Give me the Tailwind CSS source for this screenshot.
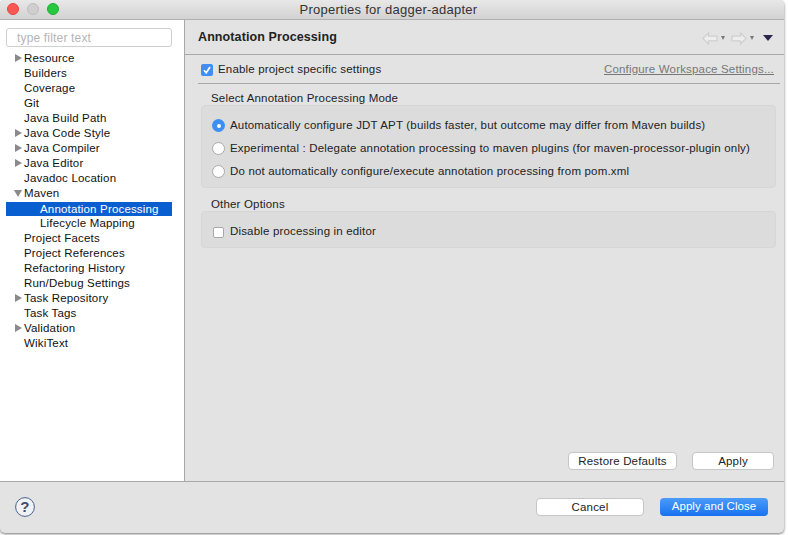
<!DOCTYPE html>
<html lang="en">
<head>
<meta charset="UTF-8">
<title>Properties for dagger-adapter</title>
<script src="https://cdn.jsdelivr.net/npm/@tailwindcss/browser@4"></script>
</head>
<body class="bg-white overflow-hidden">
<div class="w-[788px] h-[535px] bg-white font-['Liberation_Sans',sans-serif] text-[11.5px] tracking-[0.17px] text-[#222]">
  <div class="w-[784px] h-[533px] flex flex-col bg-[#e3e3e3] rounded-t-[5px] rounded-b-[5px] overflow-hidden shadow-[0_1px_3px_rgba(0,0,0,0.55)]">

    <!-- title bar -->
    <div class="relative h-[20px] shrink-0 flex items-center justify-center pr-[7px] bg-gradient-to-b from-[#e8e8e8] to-[#d2d2d2] border-b border-[#b1b1b1] text-[13px] tracking-[0.25px] text-[#333]">
      <div class="absolute left-[7px] top-[3px] flex gap-[8px]">
        <span class="w-[12px] h-[12px] rounded-full bg-[#fc5753] border border-[#df4744]"></span>
        <span class="w-[12px] h-[12px] rounded-full bg-[#cfcfcf] border border-[#bdbdbd]"></span>
        <span class="w-[12px] h-[12px] rounded-full bg-[#27c83f] border border-[#1fad32]"></span>
      </div>
      <span>Properties for dagger-adapter</span>
    </div>

    <div class="flex h-[461px] shrink-0">
      <!-- tree -->
      <div class="w-[185px] shrink-0 bg-white border-r border-[#a8a8a8] pt-[8px]">
        <div class="ml-[6px] w-[166px] h-[19px] border border-[#cfcfcf] rounded-[3px] pl-[10px] flex items-center text-[#b5b5b5] text-[12px]">type filter text</div>
        <div class="mt-[4px] ml-[6px] w-[166px] text-[#111] leading-[15px]">
          <div class="h-[15px] pl-[18px] relative"><span class="absolute left-[9px] top-[3px] w-0 h-0 border-y-[4px] border-y-transparent border-l-[7px] border-l-[#8a8a8a]"></span>Resource</div>
          <div class="h-[15px] pl-[18px]">Builders</div>
          <div class="h-[15px] pl-[18px]">Coverage</div>
          <div class="h-[15px] pl-[18px]">Git</div>
          <div class="h-[15px] pl-[18px]">Java Build Path</div>
          <div class="h-[15px] pl-[18px] relative"><span class="absolute left-[9px] top-[3px] w-0 h-0 border-y-[4px] border-y-transparent border-l-[7px] border-l-[#8a8a8a]"></span>Java Code Style</div>
          <div class="h-[15px] pl-[18px] relative"><span class="absolute left-[9px] top-[3px] w-0 h-0 border-y-[4px] border-y-transparent border-l-[7px] border-l-[#8a8a8a]"></span>Java Compiler</div>
          <div class="h-[15px] pl-[18px] relative"><span class="absolute left-[9px] top-[3px] w-0 h-0 border-y-[4px] border-y-transparent border-l-[7px] border-l-[#8a8a8a]"></span>Java Editor</div>
          <div class="h-[15px] pl-[18px]">Javadoc Location</div>
          <div class="h-[15px] pl-[18px] relative"><span class="absolute left-[8px] top-[4px] w-0 h-0 border-x-[4px] border-x-transparent border-t-[7px] border-t-[#8a8a8a]"></span>Maven</div>
          <div class="h-[14px] leading-[14px] my-[0.5px] pl-[34px] bg-[#0a5fd0] text-white">Annotation Processing</div>
          <div class="h-[15px] pl-[34px]">Lifecycle Mapping</div>
          <div class="h-[15px] pl-[18px]">Project Facets</div>
          <div class="h-[15px] pl-[18px]">Project References</div>
          <div class="h-[15px] pl-[18px]">Refactoring History</div>
          <div class="h-[15px] pl-[18px]">Run/Debug Settings</div>
          <div class="h-[15px] pl-[18px] relative"><span class="absolute left-[9px] top-[3px] w-0 h-0 border-y-[4px] border-y-transparent border-l-[7px] border-l-[#8a8a8a]"></span>Task Repository</div>
          <div class="h-[15px] pl-[18px]">Task Tags</div>
          <div class="h-[15px] pl-[18px] relative"><span class="absolute left-[9px] top-[3px] w-0 h-0 border-y-[4px] border-y-transparent border-l-[7px] border-l-[#8a8a8a]"></span>Validation</div>
          <div class="h-[15px] pl-[18px]">WikiText</div>
        </div>
      </div>

      <!-- right panel -->
      <div class="flex-1 flex flex-col min-w-0">
        <div class="h-[35px] shrink-0 border-b border-[#a8a8a8] flex items-center justify-between pl-[13px] pr-[11px]">
          <span class="text-[12.5px] font-bold tracking-[0.1px] text-[#222]">Annotation Processing</span>
          <div class="flex items-center pt-[2px]">
            <svg width="16" height="13" viewBox="0 0 16 13" fill="#eeeeee" stroke="#d0d0d0" stroke-width="1.3"><path d="M.9 6.5 6.5 1v3.2H15v4.6H6.5V12z"/></svg>
            <span class="ml-[3px] w-0 h-0 border-x-[2.5px] border-x-transparent border-t-[4px] border-t-[#777]"></span>
            <svg class="ml-[6px]" width="16" height="13" viewBox="0 0 16 13" fill="#eeeeee" stroke="#d0d0d0" stroke-width="1.3"><path d="M15.1 6.5 9.5 1v3.2H1v4.6h8.5V12z"/></svg>
            <span class="ml-[3px] w-0 h-0 border-x-[2.5px] border-x-transparent border-t-[4px] border-t-[#777]"></span>
            <span class="ml-[9px] w-0 h-0 border-x-[5px] border-x-transparent border-t-[6px] border-t-[#2c2550]"></span>
          </div>
        </div>

        <div class="flex-1 flex flex-col pl-[13px] pr-[4px] min-h-0">
          <div class="h-[29px] shrink-0 flex items-center justify-between border-b border-[#a8a8a8] pr-[6px] pt-[1px]">
            <label class="flex items-center gap-[5px] pl-[3px]">
              <span class="w-[12px] h-[12px] rounded-[2px] bg-[#3d8ff6] flex items-center justify-center">
                <svg width="10" height="10" viewBox="0 0 10 10" fill="none" stroke="#fff" stroke-width="1.7"><path d="M2 5.2 4.2 7.8 8 2"/></svg>
              </span>
              <span>Enable project specific settings</span>
            </label>
            <span class="underline text-[#777]">Configure Workspace Settings...</span>
          </div>

          <div class="pl-[13px] mt-[8px] leading-[13px]">Select Annotation Processing Mode</div>
          <div class="mt-0 ml-[3px] w-[575px] h-[83px] rounded-[4px] bg-[#dcdcdc] border border-[#d6d6d6] flex flex-col pt-[8px] pl-[10px]">
            <div class="h-[23px] flex items-center gap-[5px]">
              <span class="w-[13px] h-[13px] rounded-full bg-[#3d8ff6] flex items-center justify-center"><span class="w-[4px] h-[4px] rounded-full bg-white"></span></span>
              <span>Automatically configure JDT APT (builds faster, but outcome may differ from Maven builds)</span>
            </div>
            <div class="h-[23px] flex items-center gap-[5px]">
              <span class="w-[13px] h-[13px] rounded-full bg-white border border-[#a9a9a9]"></span>
              <span>Experimental : Delegate annotation processing to maven plugins (for maven-processor-plugin only)</span>
            </div>
            <div class="h-[23px] flex items-center gap-[5px]">
              <span class="w-[13px] h-[13px] rounded-full bg-white border border-[#a9a9a9]"></span>
              <span>Do not automatically configure/execute annotation processing from pom.xml</span>
            </div>
          </div>

          <div class="pl-[13px] mt-[10px] leading-[13px]">Other Options</div>
          <div class="mt-0 ml-[3px] w-[575px] h-[37px] rounded-[4px] bg-[#dcdcdc] border border-[#d6d6d6] flex items-center pl-[11px] gap-[6px] pt-[5px]">
            <span class="w-[11px] h-[11px] rounded-[2px] bg-white border border-[#a9a9a9]"></span>
            <span>Disable processing in editor</span>
          </div>

          <div class="mt-auto mb-[11px] flex justify-end gap-[15px] pr-[6px]">
            <button class="w-[109px] h-[18px] rounded-[4px] bg-white border border-[#c6c6c6] text-[#222]">Restore Defaults</button>
            <button class="w-[82px] h-[18px] rounded-[4px] bg-white border border-[#c6c6c6] text-[#222]">Apply</button>
          </div>
        </div>
      </div>
    </div>

    <!-- footer -->
    <div class="flex-1 border-t border-[#a8a8a8] flex items-center justify-between pl-[15px] pr-[16px] pb-[2px]">
      <svg width="20" height="20" viewBox="0 0 20 20"><circle cx="10" cy="10" r="9.4" fill="#f0f2f6" stroke="#4a6189"/><text x="10" y="15" font-size="15" font-weight="700" text-anchor="middle" font-family="Liberation Sans, sans-serif" fill="#3c4f73">?</text></svg>
      <div class="flex gap-[16px]">
        <button class="w-[108px] h-[18px] rounded-[4px] bg-white border border-[#c6c6c6] text-[#222]">Cancel</button>
        <button class="w-[108px] h-[18px] rounded-[4px] bg-gradient-to-b from-[#4a9bf9] to-[#1672f0] text-white tracking-[0.05px]">Apply and Close</button>
      </div>
    </div>
  </div>
</div>
</body>
</html>
